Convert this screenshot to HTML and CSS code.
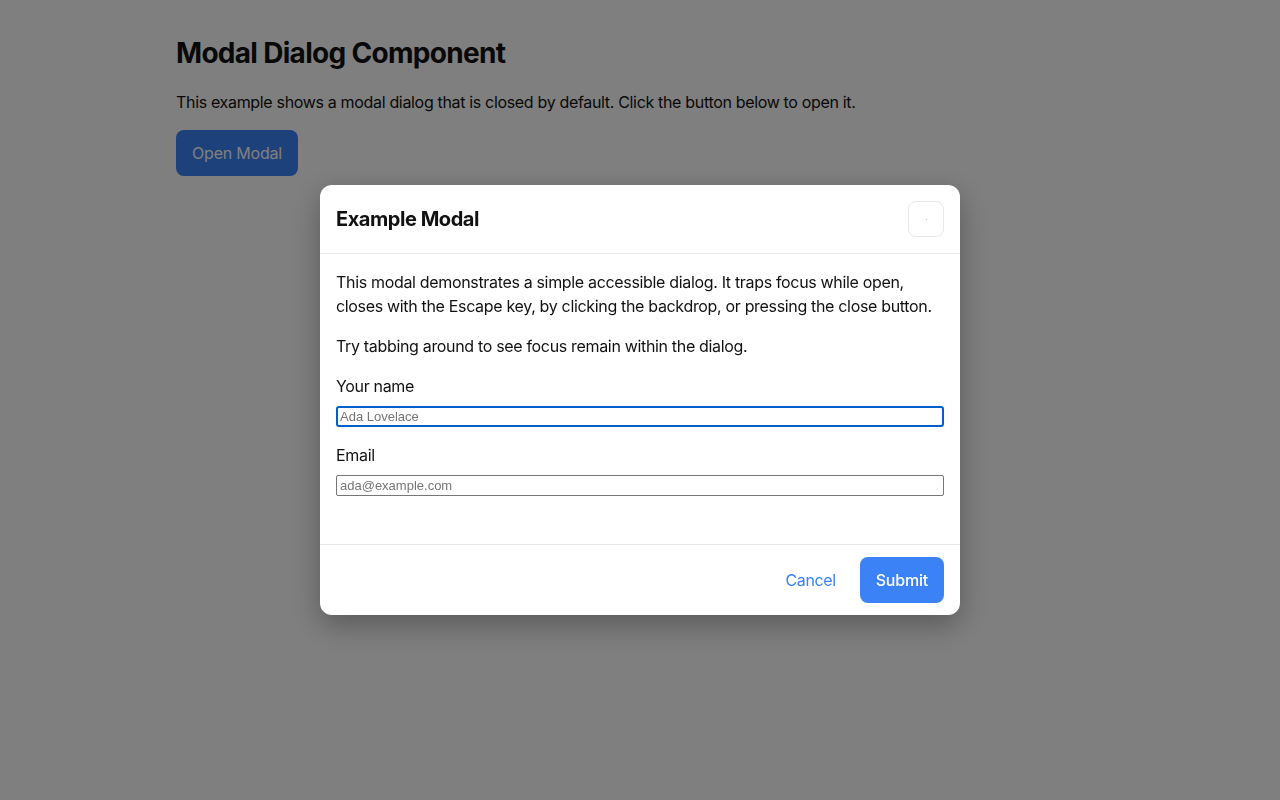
FILE: index.html
```html
<!DOCTYPE html>
<html lang="en">
<head>
<meta charset="utf-8">
<title>Modal Dialog Component</title>
<link rel="stylesheet" href="styles.css">
</head>
<body>
<main class="page">
  <h1 class="page-title">Modal Dialog Component</h1>
  <p class="page-text">This example shows a modal dialog that is closed by default. Click the button below to open it.</p>
  <button class="btn btn-primary open-btn" type="button">Open Modal</button>
</main>
<div class="backdrop">
  <div class="modal" role="dialog" aria-modal="true" aria-labelledby="modal-title">
    <header class="modal-header">
      <h2 id="modal-title" class="modal-title">Example Modal</h2>
      <button class="close-btn" type="button" aria-label="Close"><span class="close-dot"></span></button>
    </header>
    <div class="modal-body">
      <p>This modal demonstrates a simple accessible dialog. It traps focus while open, closes with the Escape key, by clicking the backdrop, or pressing the close button.</p>
      <p>Try tabbing around to see focus remain within the dialog.</p>
      <div class="field">
        <label for="name">Your name</label>
        <input id="name" class="input focused" type="text" placeholder="Ada Lovelace">
      </div>
      <div class="field">
        <label for="email">Email</label>
        <input id="email" class="input" type="email" placeholder="ada@example.com">
      </div>
    </div>
    <footer class="modal-footer">
      <button class="btn btn-link" type="button">Cancel</button>
      <button class="btn btn-primary" type="button">Submit</button>
    </footer>
  </div>
</div>
</body>
</html>
```

FILE: styles.css
```css
* { box-sizing: border-box; }
html, body { height: 100%; }
body {
  margin: 0;
  background: #ffffff;
  color: #111111;
  font-family: Inter, "Noto Sans", "Liberation Sans", sans-serif;
  font-size: 16px;
  line-height: 24px;
  letter-spacing: -0.33px;
}
.page {
  width: 928px;
  margin: 0 auto;
  padding-top: 36px;
}
.page-title {
  margin: 0;
  font-size: 28px;
  line-height: 34px;
  font-weight: 700;
  letter-spacing: -0.7px;
}
.page-text {
  margin: 20px 0 16px;
}
.btn {
  font-family: inherit;
  font-size: 16px;
  line-height: 22px;
  letter-spacing: -0.2px;
  padding: 12px 16px;
  border-radius: 8px;
  border: 0;
  cursor: pointer;
  white-space: nowrap;
}
.btn-primary {
  background: #3b82f6;
  color: #ffffff;
  font-weight: 500;
}
.open-btn {
  font-weight: 400;
  color: #ffffff;
}
.btn-link {
  background: transparent;
  color: #3b82f6;
  letter-spacing: -0.4px;
}
.backdrop {
  position: fixed;
  inset: 0;
  background: rgba(0, 0, 0, 0.5);
  display: flex;
  justify-content: center;
  align-items: flex-start;
  padding-top: 185px;
}
.modal {
  width: 640px;
  background: #ffffff;
  border-radius: 12px;
  box-shadow: 0 10px 30px rgba(0, 0, 0, 0.3);
  overflow: hidden;
}
.modal-header {
  display: flex;
  align-items: center;
  justify-content: space-between;
  padding: 16px;
  border-bottom: 1px solid #e5e7eb;
}
.modal-title {
  margin: 0;
  font-size: 20px;
  line-height: 28px;
  font-weight: 700;
  letter-spacing: -0.45px;
}
.close-btn {
  width: 36px;
  height: 36px;
  border: 1px solid #e5e7eb;
  border-radius: 8px;
  background: #ffffff;
  display: flex;
  align-items: center;
  justify-content: center;
  padding: 0;
}
.close-dot {
  width: 1px;
  height: 1px;
  background: #c8c8c8;
}
.modal-body {
  padding: 16px 16px 32px;
}
.modal-body p {
  margin: 0 0 16px;
}
.field {
  display: flex;
  flex-direction: column;
  gap: 8px;
  margin-bottom: 16px;
}
.input {
  height: 21px;
  width: 100%;
  border: 1px solid #767676;
  border-radius: 2px;
  padding: 1px 3px;
  font-family: "Liberation Sans", Arial, sans-serif;
  font-size: 13px;
  letter-spacing: 0;
  color: #111;
}
.input::placeholder { color: #757575; }
.input.focused {
  border: 2px solid #005fcc;
  padding: 0 2px;
  border-radius: 3px;
}
.modal-footer {
  display: flex;
  justify-content: flex-end;
  gap: 8px;
  padding: 12px 16px;
  border-top: 1px solid #e5e7eb;
}
```
